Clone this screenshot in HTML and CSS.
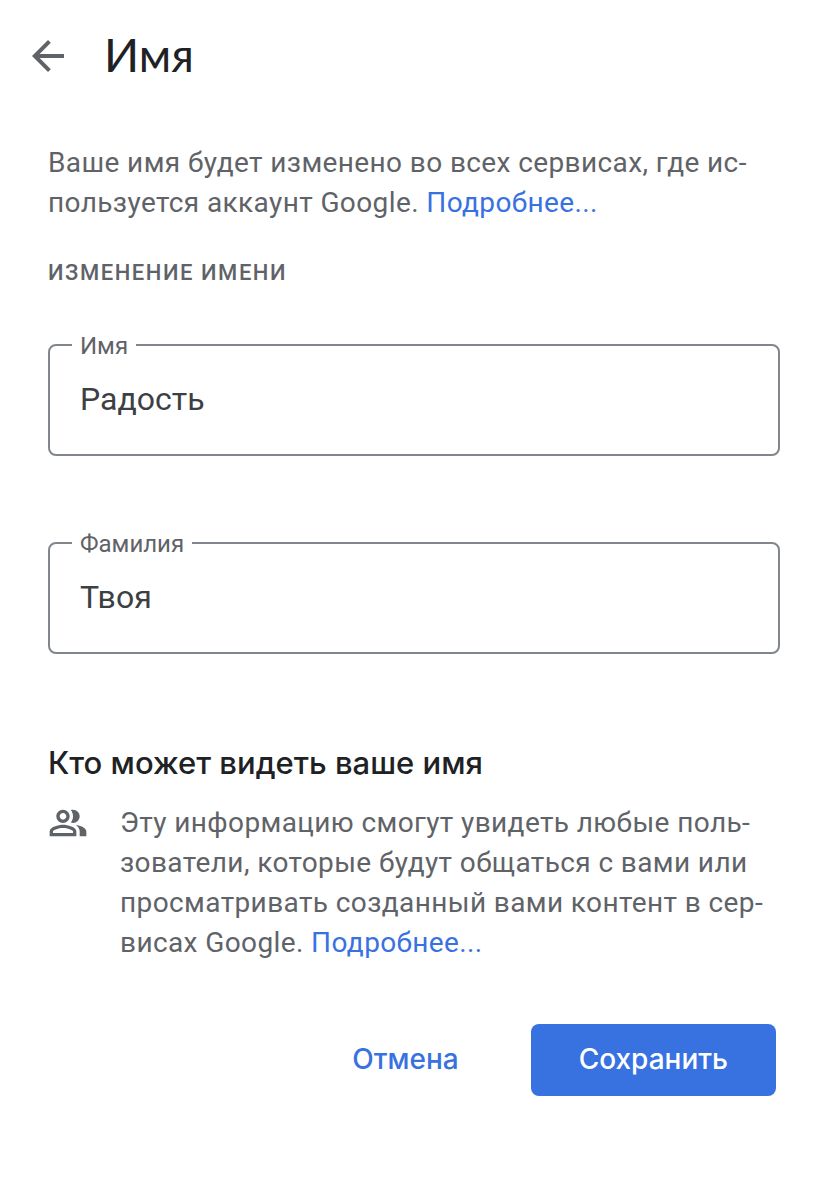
FILE: index.html
```html
<!DOCTYPE html>
<html lang="ru">

<head>
    <meta charset="UTF-8">
    <meta name="viewport" content="width=device-width, initial-scale=1.0">
    <title>Имя</title>
    <link rel="stylesheet" href="styles.css">
</head>

<body>
    <header class="header">
        <a class="back" href="#" aria-label="Назад">
            <svg viewBox="4 4 16 16" width="32" height="32">
                <path d="M20 11H7.83l5.59-5.59L12 4l-8 8 8 8 1.41-1.41L7.83 13H20v-2z" />
            </svg>
        </a>
        <h1>Имя</h1>
    </header>
    <main class="content">
        <p class="text">Ваше имя будет изменено во всех сервисах, где ис&shy;пользуется аккаунт Google. <a href="#">Подробнее...</a></p>
        <form>
            <h2 class="caption">ИЗМЕНЕНИЕ ИМЕНИ</h2>
            <div class="field">
                <label for="name">Имя</label>
                <input type="text" id="name" value="Радость">
            </div>
            <div class="field">
                <label for="surname">Фамилия</label>
                <input type="text" id="surname" value="Твоя">
            </div>
            <h2 class="title">Кто может видеть ваше имя</h2>
            <div class="info">
                <svg class="people" viewBox="0 0 24 24" width="40" height="40">
                    <path d="M16.67 13.13C18.04 14.06 19 15.32 19 17v3h4v-3c0-2.18-3.57-3.47-6.33-3.87zM15 12c2.21 0 4-1.79 4-4s-1.79-4-4-4c-.47 0-.91.1-1.33.24C14.5 5.27 15 6.58 15 8s-.5 2.73-1.33 3.76c.42.14.86.24 1.33.24zM9 12c2.21 0 4-1.79 4-4s-1.79-4-4-4-4 1.79-4 4 1.79 4 4 4zm0-6c1.1 0 2 .9 2 2s-.9 2-2 2-2-.9-2-2 .9-2 2-2zM9 13c-2.67 0-8 1.34-8 4v3h16v-3c0-2.66-5.33-4-8-4zm6 5H3v-.99C3.2 16.29 6.3 15 9 15s5.8 1.29 6 2v1z" />
                </svg>
                <p class="text">Эту информацию смогут увидеть любые поль&shy;зователи, которые будут общаться с вами или просматривать созданный вами контент в сер&shy;висах Google. <a href="#">Подробнее...</a></p>
            </div>
            <div class="buttons">
                <button type="button" class="cancel">Отмена</button>
                <button type="submit" class="save">Сохранить</button>
            </div>
        </form>
    </main>
</body>

</html>
```

FILE: styles.css
```css
* {
    box-sizing: border-box;
}

body {
    margin: 0;
    background-color: #fff;
    color: #202124;
    font-family: Roboto, sans-serif;
}

.header {
    display: flex;
    align-items: center;
    gap: 40px;
    height: 112px;
    padding: 0 32px;
}

.back {
    display: flex;
}

svg {
    fill: #5f6368;
}

h1 {
    margin: 0;
    padding-bottom: 4px;
    font-family: Lato, Roboto, sans-serif;
    font-size: 46px;
    font-weight: 400;
}

.title,
button {
    font-family: Inter, Roboto, sans-serif;
}

.content {
    padding: 31px 48px;
}

.text {
    margin: 0;
    color: #5f6368;
    font-size: 28px;
    line-height: 40px;
    letter-spacing: 0.014em;
}

a {
    color: #3871e0;
    text-decoration: none;
}

.caption {
    margin: 34px 0 55px;
    color: #5f6368;
    font-size: 22px;
    font-weight: 500;
    line-height: 32px;
    letter-spacing: 0.07em;
}

.field {
    position: relative;
    margin-bottom: 86px;
}

.field label {
    position: absolute;
    top: -12px;
    left: 24px;
    padding: 0 8px;
    background-color: #fff;
    color: #5f6368;
    font-size: 24px;
    line-height: 28px;
}

.field input {
    display: block;
    width: 100%;
    height: 112px;
    padding: 0 30px 2px;
    border: 2px solid #80868b;
    border-radius: 8px;
    color: #3c4043;
    font-family: inherit;
    font-size: 32px;
}

.title {
    margin: 0 0 20px;
    padding-top: 3px;
    font-size: 31px;
    font-weight: 500;
    line-height: 40px;
}

.info {
    display: flex;
    gap: 32px;
}

.people {
    flex-shrink: 0;
}

.buttons {
    display: flex;
    justify-content: flex-end;
    gap: 24px;
    margin: 61px 4px 0 0;
}

button {
    height: 72px;
    padding: 0 48px 2px;
    border: 0;
    border-radius: 8px;
    font-size: 28px;
    font-weight: 500;
}

.cancel {
    background-color: transparent;
    color: #3871e0;
}

.save {
    background-color: #3871e0;
    color: #fff;
}
```
